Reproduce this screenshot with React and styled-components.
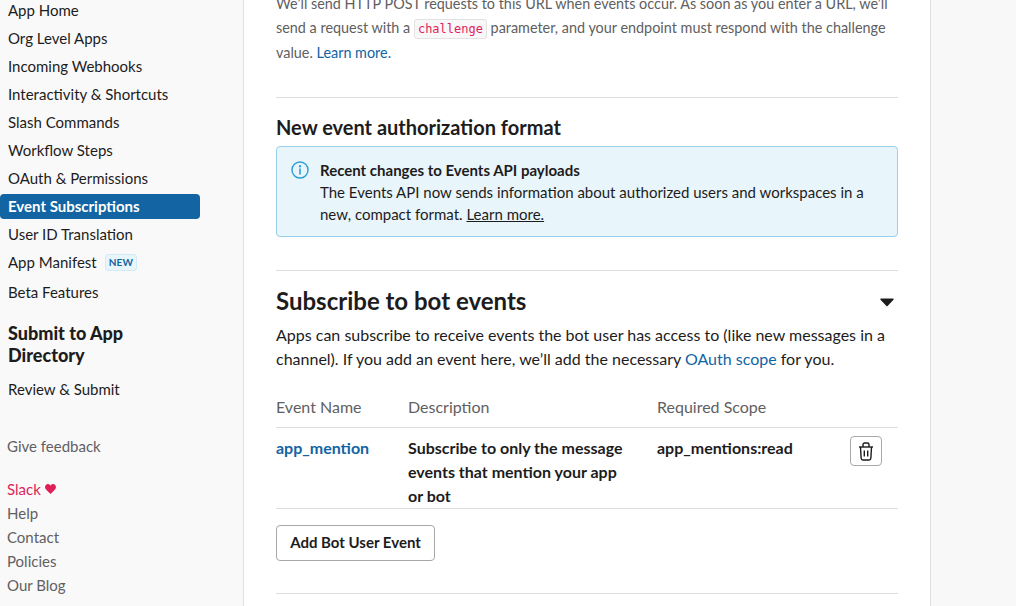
import React from 'react'
import styled, { createGlobalStyle } from 'styled-components'

const Global = createGlobalStyle`
html, body {
  margin: 0;
  padding: 0;
  height: 606px;
  overflow: hidden;
  background: #f8f8f8;
}
body {
  font-family: "Lato", "Liberation Sans", sans-serif;
  font-size: 15px;
  color: #1d1c1d;
}
`

const Page = styled.div`
display: flex;
height: 606px;
overflow: hidden;
background: #f8f8f8;
`

const Sidebar = styled.nav`
width: 244px;
flex: none;
box-sizing: border-box;
background: #f9f9f9;
border-right: 1px solid #e2e2e2;
margin-top: -4px;
`

const NavList = styled.div`
display: flex;
flex-direction: column;
width: 200px;
`

const NavItem = styled.a`
display: flex;
align-items: center;
height: 28px;
flex: none;
box-sizing: border-box;
padding-left: 8px;
font-size: 15px;
color: #1d1c1d;
margin-top: ${props => props.gap || 0}px;
`

const ActiveItem = styled(NavItem)`
height: 25px;
margin: 2px 0 1px;
padding-bottom: 1px;
background: #1264a3;
color: #fff;
font-weight: 700;
border-radius: 4px;
`

const NewBadge = styled.span`
margin-left: 8px;
padding: 0 3px;
height: 15px;
line-height: 15px;
font-size: 10px;
font-weight: 700;
letter-spacing: 0.2px;
color: #1264a3;
background: #e8f5fa;
border: 1px solid #d3ebf6;
border-radius: 3px;
`

const SideHeading = styled.h3`
margin: 16px 0 0;
padding-left: 8px;
width: 140px;
font-size: 18px;
line-height: 22px;
font-weight: 900;
color: #1d1c1d;
`

const FooterLinks = styled.div`
display: flex;
flex-direction: column;
padding-left: 7px;
color: #616061;
`

const Feedback = styled.div`
margin-top: 31px;
height: 24px;
line-height: 24px;
`

const FootLink = styled.div`
display: flex;
align-items: center;
gap: 4px;
height: 24px;
line-height: 24px;
margin-top: ${props => props.gap || 0}px;
color: ${props => props.pink ? '#e01e5a' : '#616061'};
`

const CardWrap = styled.main`
width: 687px;
flex: none;
box-sizing: border-box;
background: #fff;
border-right: 1px solid #dfdfdf;
padding: 0 32px 0 32px;
margin-top: -8px;
`

const Para = styled.p`
margin: 0 0 ${props => props.after || 0}px;
font-size: ${props => props.muted ? 14.4 : 16}px;
line-height: 24px;
color: ${props => props.muted ? '#616061' : '#1d1c1d'};
`

const Code = styled.code`
font-family: "DejaVu Sans Mono", monospace;
font-size: 12px;
color: #e01e5a;
background: #f8f8f8;
border: 1px solid #e2e2e2;
border-radius: 3px;
padding: 2px 3px;
`

const Link = styled.a`
color: #1264a3;
`

const Rule = styled.hr`
margin: ${props => props.before || 0}px 0 0;
border: 0;
border-top: 1px solid #dddddd;
`

const SubHeading = styled.h3`
margin: 17px 0 7px;
font-size: 20px;
line-height: 24px;
font-weight: 700;
`

const Callout = styled.div`
display: flex;
gap: 11px;
height: 91px;
box-sizing: border-box;
padding: 12px 14px 0 14px;
background: #e8f5fa;
border: 1px solid #97d0ea;
border-radius: 4px;
font-size: 15px;
line-height: 22px;
`

const CalloutIcon = styled.svg`
flex: none;
width: 18px;
height: 18px;
margin-top: 2px;
`

const CalloutTitle = styled.div`
font-weight: 700;
`

const Underlined = styled.a`
text-decoration: underline;
color: #1d1c1d;
`

const SectionHead = styled.div`
display: flex;
align-items: center;
justify-content: space-between;
margin: 15px 0 7px;
`

const SectionTitle = styled.h2`
margin: 0;
font-size: 24px;
line-height: 30px;
font-weight: 700;
`

const Arrow = styled.svg`
width: 14px;
height: 9px;
margin: 2px 4px 0 0;
`

const EventRow = styled.div`
display: grid;
grid-template-columns: 132px 249px 194px 47px;
border-bottom: 1px solid #dddddd;
margin-top: ${props => props.gap || 0}px;
`

const HeadCell = styled.div`
height: 39px;
line-height: 38px;
font-size: 16px;
color: #616061;
`

const Cell = styled.div`
padding: 8px 30px 0 0;
height: 72px;
font-size: 16px;
line-height: 24px;
font-weight: 700;
color: ${props => props.link ? '#1264a3' : '#1d1c1d'};
`

const IconButton = styled.button`
width: 32px;
height: 30px;
margin-top: 8px;
margin-left: -1px;
padding: 0;
display: flex;
align-items: center;
justify-content: center;
background: #fff;
border: 1px solid #a8a8a8;
border-radius: 4px;
`

const AddButton = styled.button`
display: block;
margin: 16px 0 32px;
width: 159px;
height: 36px;
padding: 0 0 2px;
font-family: inherit;
font-size: 15px;
font-weight: 700;
color: #1d1c1d;
background: #fff;
border: 1px solid #a8a8a8;
border-radius: 4px;
`

const navItems = ['App Home', 'Org Level Apps', 'Incoming Webhooks', 'Interactivity & Shortcuts', 'Slash Commands', 'Workflow Steps', 'OAuth & Permissions']

function App() {
  return (
    <Page>
      <Global />
      <Sidebar>
        <NavList>
          {navItems.map(item => <NavItem key={item}>{item}</NavItem>)}
          <ActiveItem>Event Subscriptions</ActiveItem>
          <NavItem>User ID Translation</NavItem>
          <NavItem>App Manifest<NewBadge>NEW</NewBadge></NavItem>
          <NavItem gap={2}>Beta Features</NavItem>
        </NavList>
        <SideHeading>Submit to App Directory</SideHeading>
        <NavList>
          <NavItem gap={9}>Review &amp; Submit</NavItem>
        </NavList>
        <FooterLinks>
          <Feedback>Give feedback</Feedback>
          <FootLink pink gap={19}>
            Slack
            <svg width="11" height="10" viewBox="0 0 11 10">
              <path d="M5.5 10L1 5.4C-.3 4-.3 2 .9.9 2.1-.3 4-.2 5.5 1.5 7-.2 8.9-.3 10.1.9c1.2 1.1 1.2 3.1-.1 4.5z" fill="#e01e5a" />
            </svg>
          </FootLink>
          <FootLink>Help</FootLink>
          <FootLink>Contact</FootLink>
          <FootLink>Policies</FootLink>
          <FootLink>Our Blog</FootLink>
        </FooterLinks>
      </Sidebar>
      <CardWrap>
        <Para muted after={32}>
          We’ll send HTTP POST requests to this URL when events occur. As soon as you enter a URL, we’ll send a request with a <Code>challenge</Code> parameter, and your endpoint must respond with the challenge value. <Link>Learn more.</Link>
        </Para>
        <Rule />
        <SubHeading>New event authorization format</SubHeading>
        <Callout>
          <CalloutIcon viewBox="0 0 18 18" fill="none" stroke="#2c9fd6" strokeWidth="1.4">
            <circle cx="9" cy="9" r="8" />
            <path d="M9 8v5" strokeLinecap="round" strokeWidth="1.6" />
            <circle cx="9" cy="5.3" r="0.5" fill="#2c9fd6" />
          </CalloutIcon>
          <div>
            <CalloutTitle>Recent changes to Events API payloads</CalloutTitle>
            <div>The Events API now sends information about authorized users and workspaces in a new, compact format. <Underlined>Learn more.</Underlined></div>
          </div>
        </Callout>
        <Rule before={33} />
        <SectionHead>
          <SectionTitle>Subscribe to bot events</SectionTitle>
          <Arrow viewBox="0 0 14 9"><path d="M1 0.5h12a.7.7 0 0 1 .5 1.2L7.6 8a.8.8 0 0 1-1.2 0L.5 1.7A.7.7 0 0 1 1 .5z" fill="#1d1c1d" /></Arrow>
        </SectionHead>
        <Para>
          Apps can subscribe to receive events the bot user has access to (like new messages in a channel). If you add an event here, we’ll add the necessary <Link>OAuth scope</Link> for you.
        </Para>
        <EventRow gap={17}>
          <HeadCell>Event Name</HeadCell>
          <HeadCell>Description</HeadCell>
          <HeadCell>Required Scope</HeadCell>
          <HeadCell />
        </EventRow>
        <EventRow>
          <Cell link>app_mention</Cell>
          <Cell>Subscribe to only the message events that mention your app or bot</Cell>
          <Cell>app_mentions:read</Cell>
          <div>
            <IconButton>
              <svg width="16" height="19" viewBox="0 0 16 19" fill="none" stroke="#1d1c1d" strokeWidth="1.4" strokeLinejoin="round">
                <path d="M1 5h14" />
                <path d="M5 5V2.6C5 1.7 5.7 1 6.6 1h2.8c.9 0 1.6.7 1.6 1.6V5" />
                <path d="M2.5 5l.6 11c.1 1.2.8 2 1.8 2h6.2c1 0 1.7-.8 1.8-2l.6-11" />
                <path d="M6.3 8.5v6M9.7 8.5v6" />
              </svg>
            </IconButton>
          </div>
        </EventRow>
        <AddButton>Add Bot User Event</AddButton>
        <Rule />
      </CardWrap>
    </Page>
  )
}

export default App
